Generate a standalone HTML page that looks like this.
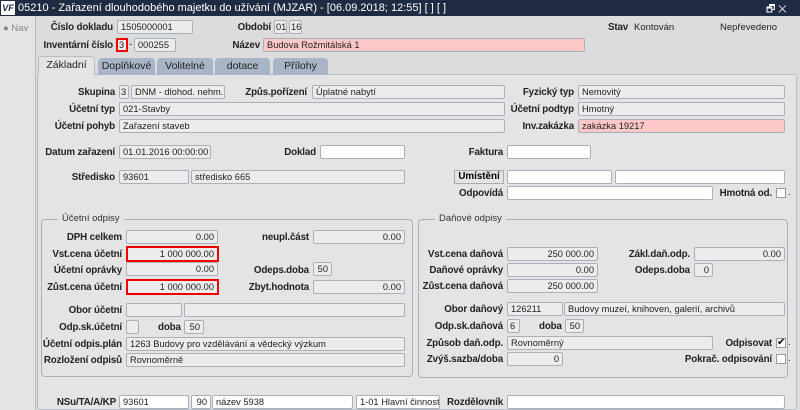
<!DOCTYPE html>
<html><head><meta charset="utf-8"><style>
*{margin:0;padding:0;box-sizing:border-box}
body{width:800px;height:410px;overflow:hidden;background:#dcdcdc;font-family:"Liberation Sans",Arial,sans-serif;position:relative}
.a{position:absolute}
.t{position:absolute;background:#1f2b42;left:0;top:0;width:800px;height:16px;color:#fff;font-size:11px;line-height:16px;padding-left:18px}
.l{position:absolute;font-size:9.8px;font-weight:bold;color:#222;white-space:nowrap;text-align:right;letter-spacing:-0.15px;padding-top:1px}
.n{position:absolute;font-size:9.5px;color:#222;white-space:nowrap}
.i{position:absolute;height:14px;background:#ececec;border:1px solid #a9b0bb;border-radius:2px;font-size:9.3px;line-height:12px;padding:0 3px;color:#222;white-space:nowrap;overflow:hidden}
.w{background:#fff}
.p{background:#ffc8c8}
.r{text-align:right}
.red{border:2px solid #e00;line-height:10px;border-radius:0}
.tab{position:absolute;top:58px;height:17px;background:#a9b5c6;border-radius:4px 4px 0 0;font-size:10.5px;color:#222;text-align:center;line-height:17px}
.g{position:absolute;border:1px solid #a8b0bc;border-radius:4px}
.lg{position:absolute;font-size:9.5px;color:#333;background:#e4e4e4;padding:0 4px}
.cb{position:absolute;width:10px;height:10px;background:#fff;border:1px solid #999}
</style></head><body>
<div class="t">05210 - Zařazení dlouhodobého majetku do užívání (MJZAR) - [06.09.2018; 12:55] [ ] [ ]</div>
<div class="a" style="left:1px;top:1px;width:14px;height:14px;background:#fff;color:#1f2b42;font-size:9px;font-weight:bold;font-style:italic;line-height:14px;text-align:center">VF</div>
<div class="a" style="left:766px;top:2px;color:#fff;font-size:10px">🗗 ✕</div>
<div class="a" style="left:0;top:16px;width:36px;height:394px;background:#e4e4e4;border-right:1px solid #bbb"></div>
<div class="n" style="left:3px;top:23px;color:#888">● Nav</div>

<div class="l" style="right:687px;top:21px">Číslo dokladu</div>
<div class="i" style="left:117px;top:20px;width:76px">1505000001</div>
<div class="l" style="right:529px;top:21px">Období</div>
<div class="i" style="left:274px;top:20px;width:13px;padding:0 1px">01</div>
<div class="i" style="left:289px;top:20px;width:13px;padding:0 1px">16</div>
<div class="l" style="left:608px;top:21px">Stav</div>
<div class="n" style="left:634px;top:22px">Kontován</div>
<div class="n" style="left:720px;top:22px">Nepřevedeno</div>

<div class="l" style="right:687px;top:39px">Inventární číslo</div>
<div class="i red" style="left:116px;top:38px;width:12px;padding:0 1px">3</div>
<div class="n" style="left:129px;top:39px">-</div>
<div class="i" style="left:134px;top:38px;width:42px">000255</div>
<div class="l" style="right:540px;top:39px">Název</div>
<div class="i p" style="left:263px;top:38px;width:322px">Budova Rožmitálská 1</div>

<div class="a" style="left:37px;top:74px;width:760px;height:336px;background:#e4e4e4;border:1px solid #b8bec8;border-radius:3px"></div>
<div class="tab" style="left:38px;width:57px;background:#e4e4e4;top:56px;height:19px;border:1px solid #b8bec8;border-bottom:none">Základní</div>
<div class="tab" style="left:98px;width:57px">Doplňkové</div>
<div class="tab" style="left:157px;width:56px">Volitelné</div>
<div class="tab" style="left:215px;width:55px">dotace</div>
<div class="tab" style="left:273px;width:55px">Přílohy</div>

<div class="l" style="right:685px;top:86px">Skupina</div>
<div class="i" style="left:119px;top:85px;width:10px;padding:0 1px">3</div>
<div class="i" style="left:131px;top:85px;width:94px">DNM - dlohod. nehm. ma</div>
<div class="l" style="right:493px;top:86px">Způs.pořízení</div>
<div class="i" style="left:312px;top:85px;width:193px">Úplatné nabytí</div>
<div class="l" style="right:226px;top:86px">Fyzický typ</div>
<div class="i" style="left:578px;top:85px;width:207px">Nemovitý</div>

<div class="l" style="right:685px;top:103px">Účetní typ</div>
<div class="i" style="left:119px;top:102px;width:386px">021-Stavby</div>
<div class="l" style="right:226px;top:103px">Účetní podtyp</div>
<div class="i" style="left:578px;top:102px;width:207px">Hmotný</div>

<div class="l" style="right:685px;top:120px">Účetní pohyb</div>
<div class="i" style="left:119px;top:119px;width:386px">Zařazení staveb</div>
<div class="l" style="right:226px;top:120px">Inv.zakázka</div>
<div class="i p" style="left:578px;top:119px;width:207px">zakázka 19217</div>

<div class="l" style="right:685px;top:146px">Datum zařazení</div>
<div class="i" style="left:119px;top:145px;width:92px">01.01.2016 00:00:00</div>
<div class="l" style="right:484px;top:146px">Doklad</div>
<div class="i w" style="left:320px;top:145px;width:85px"></div>
<div class="l" style="right:297px;top:146px">Faktura</div>
<div class="i w" style="left:507px;top:145px;width:84px"></div>

<div class="l" style="right:685px;top:171px">Středisko</div>
<div class="i" style="left:119px;top:170px;width:70px">93601</div>
<div class="i" style="left:191px;top:170px;width:214px">středisko 665</div>
<div class="a" style="left:454px;top:170px;width:50px;height:14px;background:#e4e4e4;border:1px solid #aaa;font-size:9.8px;font-weight:bold;text-align:center;line-height:12px">Umístění</div>
<div class="i w" style="left:507px;top:170px;width:105px"></div>
<div class="i w" style="left:615px;top:170px;width:170px"></div>
<div class="l" style="right:297px;top:187px">Odpovídá</div>
<div class="i w" style="left:507px;top:186px;width:206px"></div>
<div class="l" style="right:28px;top:187px">Hmotná od.</div>
<div class="cb" style="left:776px;top:188px"></div>

<div class="g" style="left:41px;top:219px;width:372px;height:158px"></div>
<div class="lg" style="left:58px;top:213px">Účetní odpisy</div>
<div class="g" style="left:418px;top:219px;width:370px;height:159px"></div>
<div class="lg" style="left:435px;top:213px">Daňové odpisy</div>

<div class="l" style="right:678px;top:231px">DPH celkem</div>
<div class="i r" style="left:126px;top:230px;width:92px">0.00</div>
<div class="l" style="right:491px;top:231px">neupl.část</div>
<div class="i r" style="left:313px;top:230px;width:92px">0.00</div>
<div class="l" style="right:678px;top:248px">Vst.cena účetní</div>
<div class="i r red" style="left:126px;top:246px;width:93px;height:16px;line-height:12px">1 000 000.00</div>
<div class="l" style="right:678px;top:264px">Účetní oprávky</div>
<div class="i r" style="left:126px;top:262px;width:92px">0.00</div>
<div class="l" style="right:491px;top:264px">Odeps.doba</div>
<div class="i r" style="left:313px;top:262px;width:19px">50</div>
<div class="l" style="right:678px;top:281px">Zůst.cena účetní</div>
<div class="i r red" style="left:126px;top:279px;width:93px;height:16px;line-height:12px">1 000 000.00</div>
<div class="l" style="right:491px;top:281px">Zbyt.hodnota</div>
<div class="i r" style="left:313px;top:280px;width:92px">0.00</div>

<div class="l" style="right:678px;top:304px">Obor účetní</div>
<div class="i" style="left:126px;top:303px;width:56px"></div>
<div class="i" style="left:184px;top:303px;width:221px"></div>
<div class="l" style="right:678px;top:321px">Odp.sk.účetní</div>
<div class="i" style="left:126px;top:320px;width:13px"></div>
<div class="l" style="left:158px;top:321px">doba</div>
<div class="i r" style="left:184px;top:320px;width:20px">50</div>
<div class="l" style="right:678px;top:338px">Účetní odpis.plán</div>
<div class="i" style="left:126px;top:337px;width:279px">1263 Budovy pro vzdělávání a vědecký výzkum</div>
<div class="l" style="right:678px;top:354px">Rozložení odpisů</div>
<div class="i" style="left:126px;top:353px;width:279px">Rovnoměrně</div>

<div class="l" style="right:297px;top:248px">Vst.cena daňová</div>
<div class="i r" style="left:507px;top:247px;width:91px">250 000.00</div>
<div class="l" style="right:110px;top:248px">Zákl.daň.odp.</div>
<div class="i r" style="left:694px;top:247px;width:91px">0.00</div>
<div class="l" style="right:297px;top:264px">Daňové oprávky</div>
<div class="i r" style="left:507px;top:263px;width:91px">0.00</div>
<div class="l" style="right:110px;top:264px">Odeps.doba</div>
<div class="i r" style="left:694px;top:263px;width:19px">0</div>
<div class="l" style="right:297px;top:280px">Zůst.cena daňová</div>
<div class="i r" style="left:507px;top:279px;width:91px">250 000.00</div>

<div class="l" style="right:297px;top:303px">Obor daňový</div>
<div class="i" style="left:507px;top:302px;width:56px">126211</div>
<div class="i" style="left:564px;top:302px;width:221px">Budovy muzeí, knihoven, galerií, archivů</div>
<div class="l" style="right:297px;top:320px">Odp.sk.daňová</div>
<div class="i" style="left:507px;top:319px;width:13px;padding:0 2px">6</div>
<div class="l" style="left:539px;top:320px">doba</div>
<div class="i r" style="left:565px;top:319px;width:19px">50</div>
<div class="l" style="right:297px;top:337px">Způsob daň.odp.</div>
<div class="i" style="left:507px;top:336px;width:206px">Rovnoměrný</div>
<div class="l" style="right:28px;top:337px">Odpisovat</div>
<div class="cb" style="left:776px;top:338px;font-size:10px;line-height:8px;text-align:center">✔</div>
<div class="n" style="left:788px;top:337px">.</div>
<div class="l" style="right:297px;top:353px">Zvýš.sazba/doba</div>
<div class="i r" style="left:507px;top:352px;width:56px">0</div>
<div class="l" style="right:28px;top:353px">Pokrač. odpisování</div>
<div class="cb" style="left:776px;top:354px"></div>
<div class="n" style="left:788px;top:353px">.</div>
<div class="n" style="left:788px;top:187px">.</div>

<div class="l" style="right:684px;top:396px">NSu/TA/A/KP</div>
<div class="i w" style="left:119px;top:395px;width:70px">93601</div>
<div class="i w r" style="left:191px;top:395px;width:20px">90</div>
<div class="i w" style="left:212px;top:395px;width:141px">název 5938</div>
<div class="i w" style="left:356px;top:395px;width:84px">1-01 Hlavní činnost</div>
<div class="l" style="right:297px;top:396px">Rozdělovník</div>
<div class="i w" style="left:507px;top:395px;width:278px"></div>
</body></html>
